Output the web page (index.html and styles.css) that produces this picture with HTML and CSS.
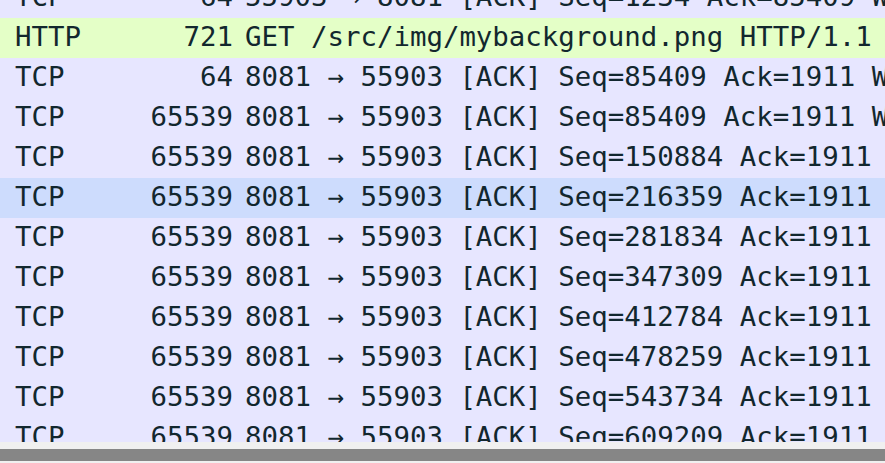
FILE: index.html
```html
<!DOCTYPE html>
<html>
<head>
<meta charset="utf-8">
<link rel="stylesheet" href="styles.css">
</head>
<body>
<div class="pane">
  <div class="list">
    <div class="row tcp"><span class="proto">TCP</span><span class="len">64</span><span class="info">55903 → 8081 [ACK] Seq=1234 Ack=85409 Win=2619648 Len=0</span></div>
    <div class="row http"><span class="proto">HTTP</span><span class="len">721</span><span class="info">GET /src/img/mybackground.png HTTP/1.1 </span></div>
    <div class="row tcp"><span class="proto">TCP</span><span class="len">64</span><span class="info">8081 → 55903 [ACK] Seq=85409 Ack=1911 Win=2619648 Len=0</span></div>
    <div class="row tcp"><span class="proto">TCP</span><span class="len">65539</span><span class="info">8081 → 55903 [ACK] Seq=85409 Ack=1911 Win=2619648 Len=65475</span></div>
    <div class="row tcp"><span class="proto">TCP</span><span class="len">65539</span><span class="info">8081 → 55903 [ACK] Seq=150884 Ack=1911 Win=2619648 Len=65475</span></div>
    <div class="row tcp selected"><span class="proto">TCP</span><span class="len">65539</span><span class="info">8081 → 55903 [ACK] Seq=216359 Ack=1911 Win=2619648 Len=65475</span></div>
    <div class="row tcp"><span class="proto">TCP</span><span class="len">65539</span><span class="info">8081 → 55903 [ACK] Seq=281834 Ack=1911 Win=2619648 Len=65475</span></div>
    <div class="row tcp"><span class="proto">TCP</span><span class="len">65539</span><span class="info">8081 → 55903 [ACK] Seq=347309 Ack=1911 Win=2619648 Len=65475</span></div>
    <div class="row tcp"><span class="proto">TCP</span><span class="len">65539</span><span class="info">8081 → 55903 [ACK] Seq=412784 Ack=1911 Win=2619648 Len=65475</span></div>
    <div class="row tcp"><span class="proto">TCP</span><span class="len">65539</span><span class="info">8081 → 55903 [ACK] Seq=478259 Ack=1911 Win=2619648 Len=65475</span></div>
    <div class="row tcp"><span class="proto">TCP</span><span class="len">65539</span><span class="info">8081 → 55903 [ACK] Seq=543734 Ack=1911 Win=2619648 Len=65475</span></div>
    <div class="row tcp"><span class="proto">TCP</span><span class="len">65539</span><span class="info">8081 → 55903 [ACK] Seq=609209 Ack=1911 Win=2619648 Len=65475</span></div>
    <div class="row tcp"><span class="proto">TCP</span><span class="len">65539</span><span class="info">8081 → 55903 [ACK] Seq=674684 Ack=1911 Win=2619648 Len=65475</span></div>
  </div>
</div>
<div class="hscroll"><div class="track"></div></div>
</body>
</html>
```

FILE: styles.css
```css
html, body {
  margin: 0;
  padding: 0;
  width: 885px;
  height: 463px;
  overflow: hidden;
  background: #f0f0f0;
}

.pane {
  height: 442px;
  overflow: hidden;
  background: #e7e6ff;
}

.list {
  margin-top: -22px;
  display: flex;
  flex-direction: column;
}

.row {
  display: grid;
  grid-template-columns: 138px 83px 1fr;
  column-gap: 12px;
  height: 40px;
  box-sizing: border-box;
  line-height: 37px;
  padding-bottom: 3px;
  font-family: "DejaVu Sans Mono", monospace;
  font-size: 27.4px;
  color: #12272e;
  white-space: nowrap;
  overflow: hidden;
}

.tcp { background: #e7e6ff; }
.http { background: #e4ffc7; }
.selected { background: #cddcfd; }

.proto { padding-left: 15px; }
.len { text-align: right; }
.info { overflow: hidden; }

.hscroll {
  height: 21px;
  padding-top: 7px;
  box-sizing: border-box;
  background: #f0f0f0;
}

.track {
  height: 12px;
  background: #868686;
}
```
